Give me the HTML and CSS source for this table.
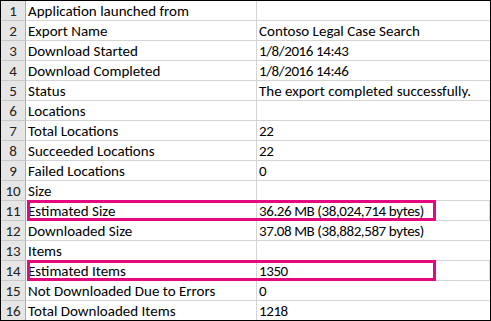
FILE: index.html
```html
<!DOCTYPE html>
<html>
<head>
<meta charset="utf-8">
<link rel="stylesheet" href="styles.css">
</head>
<body>
<div class="sheet">
  <div class="row"><div class="num">1</div><div class="cell">Application launched from</div><div class="cell"></div></div>
  <div class="row"><div class="num">2</div><div class="cell">Export Name</div><div class="cell">Contoso Legal Case Search</div></div>
  <div class="row"><div class="num">3</div><div class="cell">Download Started</div><div class="cell n">1/8/2016 14:43</div></div>
  <div class="row"><div class="num">4</div><div class="cell">Download Completed</div><div class="cell n">1/8/2016 14:46</div></div>
  <div class="row"><div class="num">5</div><div class="cell">Status</div><div class="cell">The export completed successfully.</div></div>
  <div class="row"><div class="num">6</div><div class="cell">Locations</div><div class="cell"></div></div>
  <div class="row"><div class="num">7</div><div class="cell">Total Locations</div><div class="cell n">22</div></div>
  <div class="row"><div class="num">8</div><div class="cell">Succeeded Locations</div><div class="cell n">22</div></div>
  <div class="row"><div class="num">9</div><div class="cell">Failed Locations</div><div class="cell n">0</div></div>
  <div class="row"><div class="num">10</div><div class="cell">Size</div><div class="cell"></div></div>
  <div class="row"><div class="num">11</div><div class="cell">Estimated Size</div><div class="cell n">36.26 MB (38,024,714 bytes)</div><span class="mark"></span></div>
  <div class="row"><div class="num">12</div><div class="cell">Downloaded Size</div><div class="cell n">37.08 MB (38,882,587 bytes)</div></div>
  <div class="row"><div class="num">13</div><div class="cell">Items</div><div class="cell"></div></div>
  <div class="row"><div class="num">14</div><div class="cell">Estimated Items</div><div class="cell n">1350</div><span class="mark"></span></div>
  <div class="row"><div class="num">15</div><div class="cell">Not Downloaded Due to Errors</div><div class="cell n">0</div></div>
  <div class="row"><div class="num">16</div><div class="cell">Total Downloaded Items</div><div class="cell n">1218</div></div>
</div>
</body>
</html>
```
FILE: styles.css
```css
html, body {
  margin: 0;
  padding: 0;
  background: #fff;
}
.sheet {
  width: 489px;
  border: 1px solid #000;
  font-family: Carlito, Calibri, Lato, "Liberation Sans", sans-serif;
  font-size: 15px;
  color: #000;
}
.row {
  position: relative;
  display: grid;
  grid-template-columns: 25px 231px 1fr;
  height: 20px;
}
.row:last-child {
  height: 19px;
}
.num,
.cell {
  box-sizing: border-box;
  height: 20px;
  line-height: 20px;
  border-bottom: 1px solid #d4d4d4;
  border-right: 1px solid #d4d4d4;
  white-space: nowrap;
  overflow: hidden;
}
.row:last-child .num,
.row:last-child .cell {
  height: 19px;
  border-bottom: none;
}
.num {
  background: #e6e6e6;
  color: #222;
  text-align: center;
  border-right-color: #ababab;
  border-bottom-color: #c8c8c8;
}
.cell {
  padding-left: 2px;
}
.cell.n {
  letter-spacing: -0.4px;
}
.cell:last-child {
  border-right: none;
}
.mark {
  position: absolute;
  top: -1px;
  left: 26px;
  width: 409px;
  height: 21px;
  box-sizing: border-box;
  border: 3px solid #e5097f;
  pointer-events: none;
}
```
